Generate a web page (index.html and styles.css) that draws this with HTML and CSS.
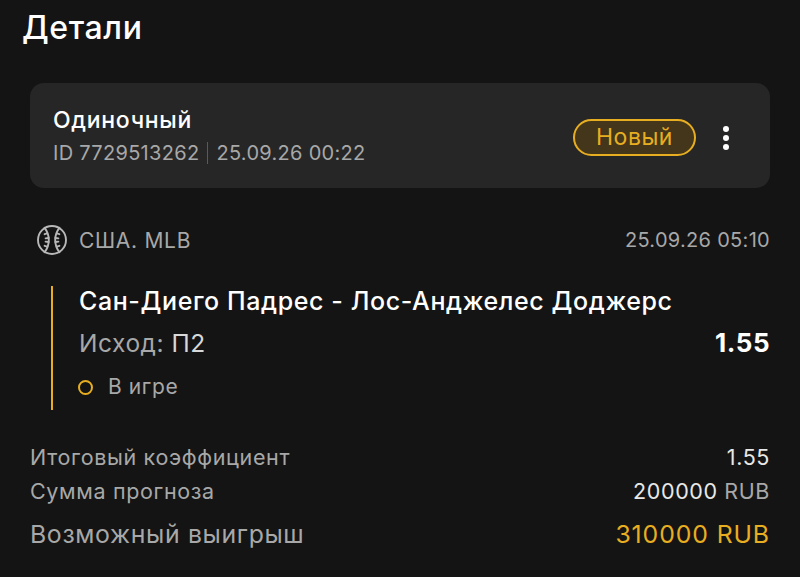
FILE: index.html
```html
<!DOCTYPE html>
<html lang="ru">
<head>
  <meta charset="UTF-8" />
  <title>Детали</title>
  <link rel="stylesheet" href="styles.css">
</head>
<body>
  <div class="page">
    <h1 class="title">Детали</h1>

    <!-- Bet header card -->
    <div class="card">
      <div class="card-info">
        <div class="card-name">Одиночный</div>
        <div class="card-meta">
          <span>ID 7729513262</span>
          <span class="sep"></span>
          <span>25.09.26 00:22</span>
        </div>
      </div>
      <div class="badge">Новый</div>
      <div class="menu" aria-label="Меню">
        <span class="dot"></span>
        <span class="dot"></span>
        <span class="dot"></span>
      </div>
    </div>

    <!-- League row -->
    <div class="league">
      <div class="league-name">
        <svg class="ball" width="30" height="30" viewBox="0 0 30 30" fill="none" stroke="#b8b8b8" stroke-width="1.9" stroke-linecap="round">
          <circle cx="15" cy="15" r="14"/>
          <path d="M7.6 2.8C10.4 6.4 11.8 10.6 11.8 15C11.8 19.4 10.4 23.6 7.6 27.2"/>
          <path d="M22.4 2.8C19.6 6.4 18.2 10.6 18.2 15C18.2 19.4 19.6 23.6 22.4 27.2"/>
          <path d="M7.6 9.2L10.2 8.4M8.6 13.4L11.6 13M8.6 16.6L11.6 17M7.6 20.8L10.2 21.6"/>
          <path d="M22.4 9.2L19.8 8.4M21.4 13.4L18.4 13M21.4 16.6L18.4 17M22.4 20.8L19.8 21.6"/>
        </svg>
        <span>США. MLB</span>
      </div>
      <div class="league-date">25.09.26 05:10</div>
    </div>

    <!-- Event -->
    <div class="event">
      <div class="event-teams">Сан-Диего Падрес - Лос-Анджелес Доджерс</div>
      <div class="event-pick">
        <div class="pick-label">Исход: <span class="pick-value">П2</span></div>
        <div class="pick-odds">1.55</div>
      </div>
      <div class="event-status">
        <span class="status-ring"></span>
        <span>В игре</span>
      </div>
    </div>

    <!-- Totals -->
    <div class="totals">
      <div class="row">
        <span class="row-label">Итоговый коэффициент</span>
        <span class="row-value">1.55</span>
      </div>
      <div class="row">
        <span class="row-label">Сумма прогноза</span>
        <span class="row-value">200000 <span class="currency">RUB</span></span>
      </div>
      <div class="row row-win">
        <span class="row-label">Возможный выигрыш</span>
        <span class="win-value">310000 RUB</span>
      </div>
    </div>
  </div>
</body>
</html>
```

FILE: styles.css
```css
/* Reset */
* {
  margin: 0; padding: 0; box-sizing: border-box;
}
html, body {
  height: 100%;
  overflow: hidden;
  background: #141414;
  font-family: Inter, "Noto Sans", sans-serif;
  color: #fff;
}
.page {
  display: flex;
  flex-direction: column;
  padding: 8px 30px 0;
}

.title {
  margin-left: -8px;
  font-size: 32px;
  line-height: 40px;
  font-weight: 500;
  letter-spacing: 0.6px;
}

/* Header card */
.card {
  display: flex;
  align-items: center;
  height: 105px;
  margin-top: 35px;
  padding: 0 41px 0 23px;
  background: #262626;
  border-radius: 14px;
}
.card-info {
  flex: 1;
}
.card-name {
  font-size: 23px;
  line-height: 28px;
  font-weight: 500;
  letter-spacing: 0.7px;
}
.card-meta {
  display: flex;
  align-items: center;
  gap: 8px;
  margin-top: 6px;
  font-size: 20px;
  line-height: 26px;
  color: #a8a8a8;
  letter-spacing: 0.3px;
}
.sep {
  width: 1px;
  height: 22px;
  background: #5a5a5a;
}
.badge {
  width: 123px;
  height: 37px;
  margin: 4px 27px 0 0;
  border: 2px solid #e8ae21;
  border-radius: 19px;
  background: #43361a;
  color: #e8ae21;
  font-size: 23px;
  line-height: 33px;
  text-align: center;
  letter-spacing: 0.5px;
}
.menu {
  display: flex;
  flex-direction: column;
  gap: 3px;
  margin-top: 4px;
}
.dot {
  width: 6px;
  height: 6px;
  border-radius: 50%;
  background: #fff;
}

/* League row */
.league {
  display: flex;
  align-items: center;
  justify-content: space-between;
  margin-top: 36px;
  height: 32px;
  font-size: 20px;
  color: #a8a8a8;
}
.league-name {
  display: flex;
  align-items: center;
  gap: 12px;
  margin-left: 7px;
  font-size: 21px;
  letter-spacing: 0.7px;
}
.league-date {
  letter-spacing: 0.3px;
}

/* Event block */
.event {
  margin: 30px 0 0 21px;
  height: 124px;
  padding-left: 26px;
  border-left: 2px solid #e8ae21;
}
.event-teams {
  font-size: 25px;
  line-height: 30px;
  font-weight: 500;
  letter-spacing: 0.6px;
}
.event-pick {
  display: flex;
  align-items: center;
  justify-content: space-between;
  margin-top: 11px;
  line-height: 32px;
}
.pick-label {
  font-size: 24.5px;
  color: #a8a8a8;
  letter-spacing: 0.55px;
}
.pick-value {
  color: #d8d8d8;
}
.pick-odds {
  font-size: 26px;
  font-weight: 700;
  letter-spacing: 0.5px;
}
.event-status {
  display: flex;
  align-items: center;
  gap: 15px;
  margin-top: 15px;
  font-size: 21px;
  line-height: 26px;
  color: #a8a8a8;
  letter-spacing: 0.6px;
}
.status-ring {
  width: 15px;
  height: 15px;
  margin-left: -1px;
  border: 2.5px solid #e8ae21;
  border-radius: 50%;
}

/* Totals */
.totals {
  display: flex;
  flex-direction: column;
  margin-top: 30px;
}
.row {
  display: flex;
  align-items: center;
  justify-content: space-between;
  height: 34px;
  font-size: 21.5px;
  color: #a8a8a8;
  letter-spacing: 0.65px;
}
.row-value {
  color: #e8e8e8;
  letter-spacing: 0.6px;
}
.currency {
  color: #a8a8a8;
}
.row-win {
  height: 50px;
  padding-top: 2px;
  font-size: 24.8px;
}
.win-value {
  color: #e8ae21;
  letter-spacing: 0.9px;
}
```
